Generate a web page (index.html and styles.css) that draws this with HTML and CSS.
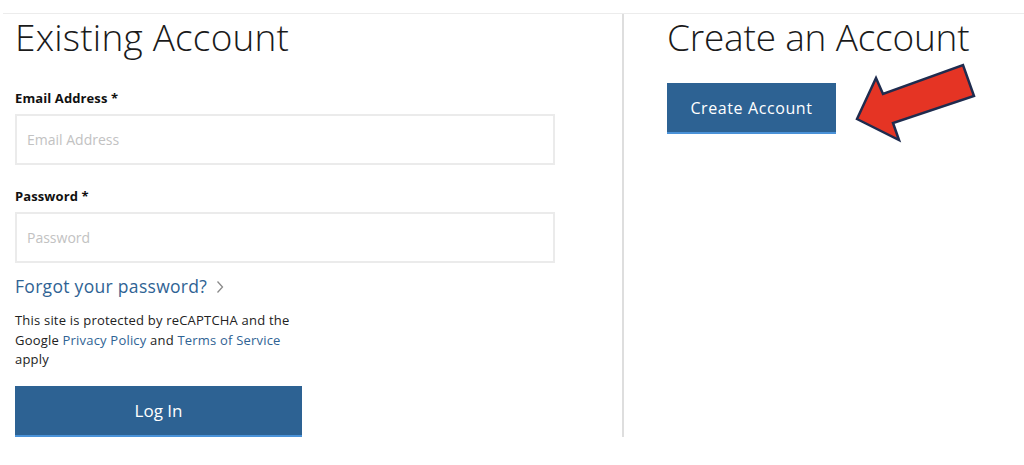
FILE: index.html
```html
<!DOCTYPE html>
<html lang="en">
<head>
<meta charset="utf-8">
<title>Account</title>
<link rel="stylesheet" href="styles.css">
</head>
<body>
<div class="page">
  <section class="col col-left">
    <h1 class="heading">Existing Account</h1>
    <label class="label" for="email">Email Address *</label>
    <input class="field" id="email" type="text" placeholder="Email Address">
    <label class="label label-pw" for="pw">Password *</label>
    <input class="field" id="pw" type="password" placeholder="Password">
    <a class="forgot" href="#">Forgot your password?<svg class="chev" width="8" height="14" viewBox="0 0 8 14" aria-hidden="true"><polyline points="1.5,1.5 6.5,7 1.5,12.5" fill="none" stroke="#8a8a8a" stroke-width="1.3"/></svg></a>
    <p class="legal">This site is protected by reCAPTCHA and the<br>Google <a href="#">Privacy Policy</a> and <a href="#">Terms of Service</a><br>apply</p>
    <button class="btn btn-login" type="button">Log In</button>
  </section>
  <section class="col col-right">
    <h1 class="heading">Create an Account</h1>
    <button class="btn btn-create" type="button">Create Account</button>
  </section>
  <svg class="arrow" width="140" height="100" viewBox="0 0 140 100" aria-hidden="true">
    <polygon points="5,58 24,17 31,33 111,4 122,35 41,62 47,79" fill="#e53424" stroke="#1f2c4f" stroke-width="2.5" stroke-linejoin="miter"/>
  </svg>
</div>
</body>
</html>
```

FILE: styles.css
```css
* { box-sizing: border-box; }

body {
  margin: 0;
  background: #fff;
  font-family: "Open Sans", "Liberation Sans", sans-serif;
  color: #1d1d1d;
}

.page {
  position: relative;
  margin-top: 13px;
  margin-left: 3px;
  border-top: 1px solid #ececec;
  display: grid;
  grid-template-columns: 621px 1fr;
  width: 1021px;
}

.col-left {
  border-right: 2px solid #dedede;
  padding-left: 12px;
  height: 423px;
  display: flex;
  flex-direction: column;
  align-items: flex-start;
}

.col-right {
  padding-left: 43px;
  display: flex;
  flex-direction: column;
  align-items: flex-start;
}

.heading {
  margin: 0;
  font-size: 37px;
  font-weight: 300;
  line-height: 46px;
  color: #1a1a1a;
}

.col-left .heading {
  letter-spacing: 0.2px;
}

.col-right .heading {
  letter-spacing: -0.2px;
}

.label {
  display: block;
  margin-top: 29px;
  margin-bottom: 7px;
  font-size: 13px;
  line-height: 18px;
  font-weight: 700;
  color: #111;
  letter-spacing: 0.1px;
}

.label-pw {
  margin-top: 22px;
}

.field {
  width: 540px;
  height: 51px;
  border: 2px solid #ebebeb;
  padding: 0 10px;
  font-family: inherit;
  font-size: 14px;
  color: #333;
  background: #fff;
  outline: none;
}

.field::placeholder {
  color: #c2c2c2;
}

.forgot {
  margin-top: 11px;
  display: flex;
  align-items: center;
  font-size: 17.5px;
  line-height: 24px;
  color: #2f6394;
  text-decoration: none;
  letter-spacing: 0.3px;
}

.chev {
  margin-left: 9px;
  margin-top: 1px;
}

.legal {
  margin: 13px 0 0;
  font-size: 13px;
  line-height: 19.5px;
  color: #222;
  letter-spacing: 0.2px;
}

.legal a {
  color: #2f6394;
  text-decoration: none;
}

.btn {
  border: 0;
  border-bottom: 2px solid #4a92d8;
  background: #2d6293;
  color: #fff;
  font-family: inherit;
  height: 51px;
  padding: 0;
  cursor: pointer;
}

.btn-login {
  margin-top: 16px;
  width: 287px;
  font-size: 17px;
}

.btn-create {
  margin-top: 23px;
  width: 169px;
  font-size: 16px;
  letter-spacing: 0.6px;
}

.arrow {
  position: absolute;
  left: 849px;
  top: 47px;
}
```
